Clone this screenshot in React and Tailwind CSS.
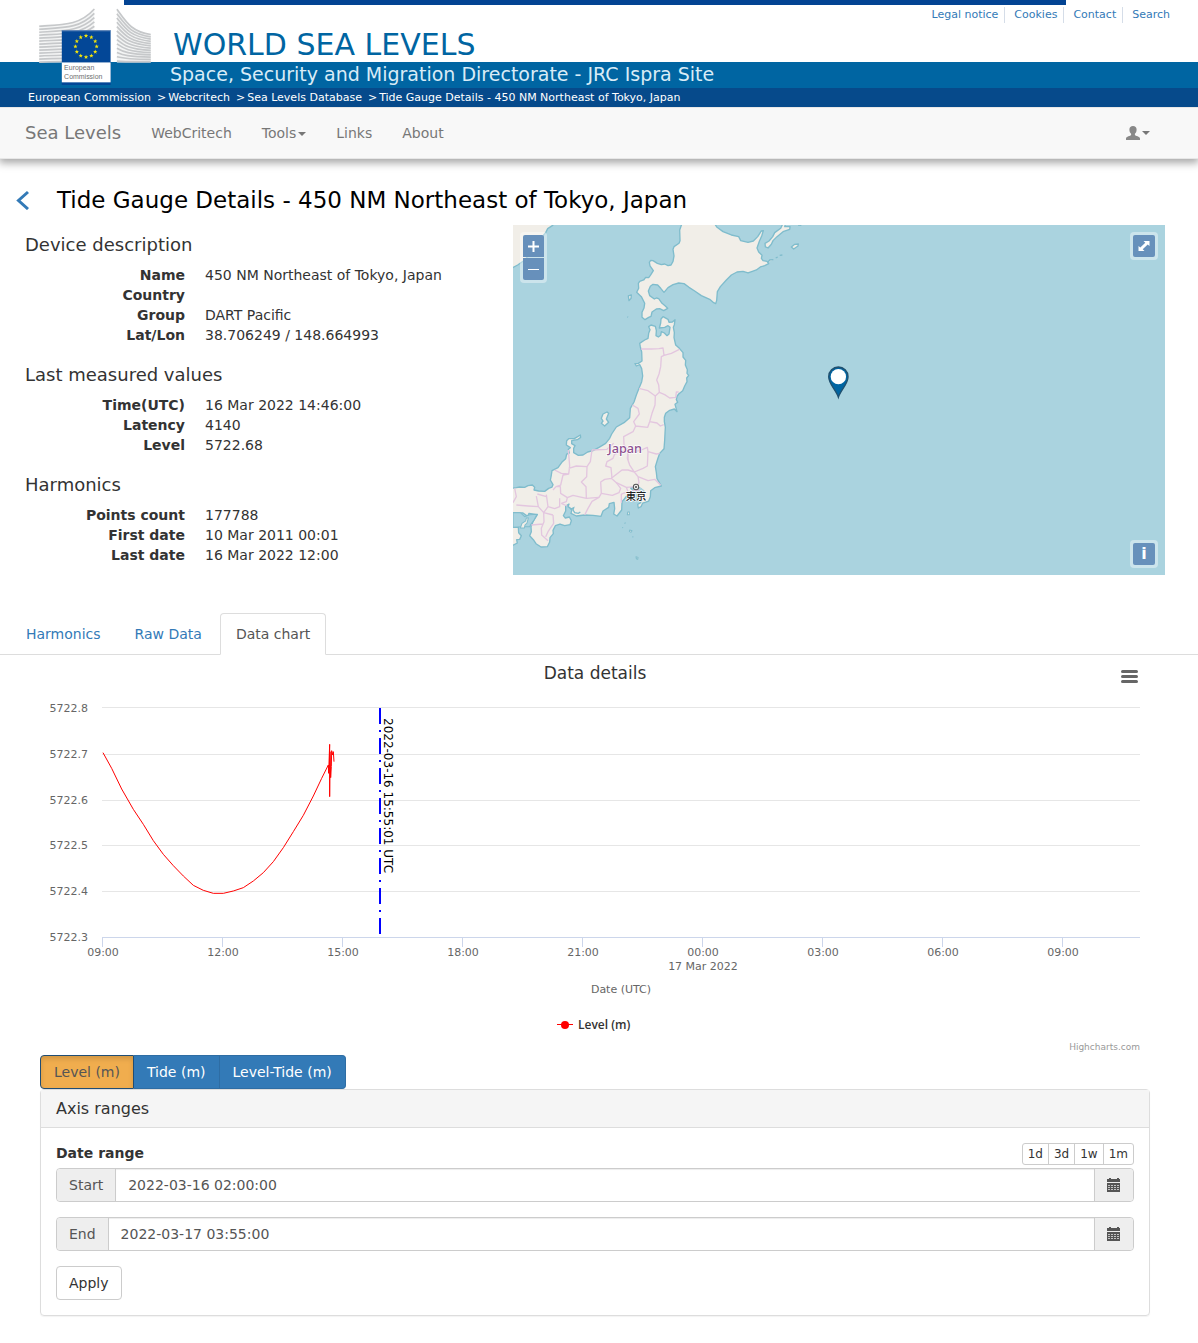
import React, { useState } from "react";

const STAR = "M0 -6 L1.5 -2 5.7 -1.9 2.4 .8 3.5 4.9 0 2.5 -3.5 4.9 -2.4 .8 -5.7 -1.9 -1.5 -2Z";

function CommissionLogo() {
  const rows = Array.from({ length: 13 }, (_, i) => i);
  return (
    <svg viewBox="27 24 336 232" className="absolute left-[39px] top-2 h-[77px] w-[112px]" role="img" aria-label="European Commission">
      <path d="M27 76 C110 70 150 75 193 25 V188 H27Z" fill="#f4f5f5" />
      <path d="M261 24 C300 75 300 95 363 103 V188 H261Z" fill="#f4f5f5" />
      <g fill="none" stroke="#c6c8ca" strokeWidth="5">
        {rows.map((i) => (
          <path key={i} d={`M27 ${79 + i * 9} C105 ${74 + i * 9} 150 ${75 + i * 9.5} 193 ${27 + i * 13}`} />
        ))}
        {rows.map((i) => (
          <path key={`r${i}`} d={`M261 ${28 + i * 13} C${290 - i} ${68 + i * 9.8} ${305 - i} ${95 + i * 7.6} 363 ${104 + i * 6.8}`} />
        ))}
      </g>
      <rect x="95" y="91" width="147" height="165" fill="#034797" />
      <rect x="95" y="91" width="147" height="3" fill="#6f8fbd" />
      <rect x="95" y="188" width="147" height="60" fill="#fff" />
      <g fill="#f5e50a">
        {Array.from({ length: 12 }, (_, i) => (
          <path key={i} d={STAR} transform={`translate(${168 + 32 * Math.sin((i * Math.PI) / 6)} ${140 - 32 * Math.cos((i * Math.PI) / 6)}) scale(1.15)`} />
        ))}
      </g>
      <g fill="#6d6e70" fontFamily="Liberation Sans, sans-serif" fontSize="21">
        <text x="102" y="211">European</text>
        <text x="102" y="237">Commission</text>
      </g>
    </svg>
  );
}

function Header() {
  const links = ["Legal notice", "Cookies", "Contact", "Search"];
  const crumbs = ["European Commission", "Webcritech", "Sea Levels Database", "Tide Gauge Details - 450 NM Northeast of Tokyo, Japan"];
  return (
    <header className="relative">
      <div className="h-[62px]">
        <div className="ml-[124px] mr-[132px] h-[5px] bg-[#034493]" />
        <div className="flex items-start justify-between pl-[173px] pr-7">
          <h1 className="pt-5 text-[30px] leading-10 whitespace-nowrap text-[#0065a2]">WORLD SEA LEVELS</h1>
          <ul className="flex pt-0.5 text-[11px] leading-4 text-[#337ab7]">
            {links.map((l, i) => (
              <li key={l} className={i < 3 ? "mr-[9px] border-r border-[#d5dde8] pr-[6px]" : ""}>
                <a href="#">{l}</a>
              </li>
            ))}
          </ul>
        </div>
      </div>
      <div className="h-[26px] bg-[#0065a2] pl-[170px] text-[19px] leading-6 whitespace-nowrap text-[#d9ecf7]">
        Space, Security and Migration Directorate - JRC Ispra Site
      </div>
      <nav aria-label="Breadcrumb" className="h-[19px] bg-[#064a8b] pl-7 text-[11px] leading-5 whitespace-nowrap text-white">
        {crumbs.map((c, i) => (
          <span key={c}>
            {i > 0 && <span className="pl-1.5 pr-0.5">&gt;</span>}
            <a href="#">{c}</a>
          </span>
        ))}
      </nav>
      <CommissionLogo />
    </header>
  );
}

function Caret() {
  return <span className="ml-0.5 inline-block border-x-4 border-t-4 border-x-transparent border-t-[#777] align-middle" />;
}

function Navbar() {
  return (
    <nav className="flex h-[52px] items-center border-y border-[#e7e7e7] bg-[#f8f8f8] pl-[25px] pr-12 text-sm text-[#777] shadow-[0_3px_8px_1px_rgba(0,0,0,0.35)]">
      <a href="#" className="mr-[30px] text-lg">Sea Levels</a>
      <div className="flex gap-[30px]">
        <a href="#">WebCritech</a>
        <button type="button">Tools<Caret /></button>
        <a href="#">Links</a>
        <a href="#">About</a>
      </div>
      <button type="button" aria-label="User" className="ml-auto flex items-center">
        <svg viewBox="0 0 14 14" className="size-[14px]" fill="#888">
          <path d="M7 0C9.200 0 10.600 1.200 10.600 3.500C10.600 5.600 9.800 7 8.900 7.800V9C9.300 9.900 14 10.400 14 12.500V14H0V12.500C0 10.400 4.700 9.900 5.100 9V7.800C4.200 7 3.400 5.600 3.400 3.500C3.400 1.200 4.800 0 7 0Z" />
        </svg>
        <Caret />
      </button>
    </nav>
  );
}

const SECTIONS = [
  ["Device description", [["Name", "450 NM Northeast of Tokyo, Japan"], ["Country", ""], ["Group", "DART Pacific"], ["Lat/Lon", "38.706249 / 148.664993"]]],
  ["Last measured values", [["Time(UTC)", "16 Mar 2022 14:46:00"], ["Latency", "4140"], ["Level", "5722.68"]]],
  ["Harmonics", [["Points count", "177788"], ["First date", "10 Mar 2011 00:01"], ["Last date", "16 Mar 2022 12:00"]]],
];

function Details() {
  return (
    <div className="pt-2.5">
      {SECTIONS.map(([title, rows]) => (
        <section key={title} className="mb-5">
          <h3 className="mb-2.5 text-lg leading-5">{title}</h3>
          <dl className="grid grid-cols-[160px_1fr] gap-x-5 text-sm leading-5">
            {rows.map(([k, v]) => (
              <React.Fragment key={k}>
                <dt className="text-right font-bold">{k}</dt>
                <dd>{v}</dd>
              </React.Fragment>
            ))}
          </dl>
        </section>
      ))}
    </div>
  );
}

function MapDrawing() {
  return (
    <svg viewBox="0 15 1956 1050" preserveAspectRatio="xMidYMid slice" className="block h-full w-full bg-[#aad3df]" role="img" aria-label="Map of Japan">
      <g fill="#f1eee8" stroke="#7fbccc" strokeWidth="4" strokeLinejoin="round">
        <path d="M-5 10 L125 10 118 17 104 26 98 38 92 45 86 60 78 68 68 86 50 104 30 124 14 135 -5 145Z" />
        <path d="M507 10 L500 30 501 62 498 70 483 80 480 88 483 108 480 124 474 135 465 137 455 132 445 134 433 130 420 122 413 121 409 127 411 138 421 152 412 166 407 173 398 172 392 180 380 184 376 190 377 205 371 217 385 230 395 250 393 264 387 277 387 292 396 299 407 292 414 289 417 276 430 267 440 266 452 272 464 265 456 257 447 250 437 236 430 234 424 237 410 227 406 213 412 199 420 193 434 195 443 205 453 217 465 203 480 194 497 189 513 191 528 202 545 213 565 227 590 238 602 248 608 251 611 241 613 215 622 200 640 180 655 165 672 156 690 154 705 159 718 154 730 150 742 141 755 137 767 131 762 124 750 122 745 115 747 106 737 96 732 84 739 64 746 48 751 32 745 33 734 50 721 63 705 67 683 62 677 50 655 45 630 35 612 22 604 10Z" />
        <path d="M810 10 L803 25 785 38 779 50 768 63 756 70 757 81 765 84 775 73 780 62 792 50 810 35 830 28 831 20 815 20 818 10Z" />
        <path d="M835 81 L845 73 856 72 855 78 842 87Z M764 127 L770 120 781 119 M788 114 L794 111 M800 106 L808 105 M855 15 L865 16 M346 228 L355 225 354 235 348 242Z M343 290 l2 2" />
        <path d="M407 320 L414 315 427 319 430 332 429 347 436 351 443 346 445 335 454 339 462 347 468 342 471 322 465 317 455 322 439 324 443 309 444 297 450 290 465 298 468 307 478 306 486 299 484 314 481 322 484 338 483 353 488 375 499 385 510 398 510 411 518 421 517 435 523 449 522 460 527 466 521 474 522 485 515 498 509 512 497 522 492 529 490 539 494 547 486 553 492 575 484 567 470 571 458 580 454 592 454 605 457 622 456 640 455 660 453 686 440 700 434 717 427 740 430 758 432 776 445 798 425 803 413 812 412 830 407 843 389 849 384 860 376 864 374 853 383 848 384 838 394 827 392 812 382 805 370 799 353 804 360 812 358 824 340 829 334 837 327 845 326 870 312 888 302 882 305 866 303 847 289 851 287 862 270 873 264 889 240 886 215 885 190 888 174 880 177 868 165 860 168 852 158 858 158 873 151 887 157 894 169 891 175 902 171 914 155 917 141 912 127 917 120 931 121 941 111 953 110 966 103 980 84 981 69 971 61 959 50 947 55 935 54 920 60 905 67 894 73 884 48 880 44 889 30 879 0 878 -5 878 -5 805 10 803 20 801 35 802 45 797 58 795 65 802 63 810 77 813 95 814 107 805 117 801 120 794 112 780 115 765 117 752 135 743 148 725 158 716 161 702 169 699 166 688 172 683 160 675 161 662 167 656 184 656 202 645 203 652 193 659 176 662 176 671 186 677 182 685 182 698 196 706 210 705 224 696 240 692 258 682 278 670 290 655 296 642 310 621 333 608 350 593 352 565 363 546 370 525 378 505 386 485 389 468 386 446 380 434 370 438 366 431 376 430 387 423 386 396 382 381 380 370 395 360 405 355 407 340 411 329Z" />
        <g transform="translate(0 510)">
          <path d="M265 85 L270 72 282 66 287 70 280 87 287 97 275 108 265 100 270 93Z M-5 412 L16 411 17 428 25 437 20 448 11 449 13 459 -5 468Z" />
          <path d="M344 366 h5 v8 h-6z M350 420 l7 2 -3 5 -5 -3z M369 500 l6 2 -1 6 -4 -2z M334 400 l4 -2 M328 412 l2 2 M358 440 l3 1" strokeWidth="3" />
        </g>
      </g>
      <path d="M0 878 L22 878 35 890 50 884 72 883 62 902 54 912 50 920 30 920 0 922Z" fill="#aad3df" stroke="#7fbccc" strokeWidth="3" />
      <path d="M22 924 L27 910 38 903 40 894 46 894 42 909 36 915 34 924Z" fill="#f1eee8" stroke="#7fbccc" strokeWidth="3" />
      <path d="M172 868 L182 863 180 870 185 878 196 880 202 876" fill="none" stroke="#7fbccc" strokeWidth="4" />
      <path d="M370 806 L384 803 394 812 386 818 374 814Z" fill="#aad3df" />
      <g fill="none" stroke="#e3c6df" strokeWidth="4" strokeLinejoin="round">
        <path d="M384 387 L415 387 438 386 450 384 453 406 445 410 443 440 438 462 431 480 437 495 439 517 427 528 405 512 378 505 M453 406 L475 400 499 388 M439 517 L455 524 470 534 488 532 490 516 497 516" />
        <g transform="translate(0 510)">
          <path d="M427 18 L426 45 417 70 410 95 404 112 368 108 360 125 332 140 333 165 345 180 345 210 M358 45 L375 55 379 72 362 95 368 108 M410 95 L432 99 442 108 452 104" />
          <path d="M345 180 L355 188 385 180 403 172 405 185 430 192 440 190 M405 185 L403 228 390 235 364 246 345 240 327 240 295 265 275 268 263 276 265 310 258 322 237 334 225 355 215 375 M364 246 L350 225 343 205 345 180 M364 246 L375 260 378 278 370 290 340 292 310 278 295 265 M375 260 L405 272 425 268 443 286" />
          <path d="M345 180 L305 192 300 205 282 215 278 228 294 233 297 265 M237 180 L282 178 302 160 M237 180 L232 215 222 230 221 260 205 276 219 290 220 325 180 316 163 323 160 335 145 340 M258 322 L220 325 M163 323 L143 310 142 290 129 290 120 300 M166 180 L170 228 167 252 150 255 143 285 129 290 M167 235 L190 228 221 230 M125 240 L145 250 167 252 M310 278 L323 295 318 308 298 316 265 310" />
          <path d="M340 292 L345 305 325 312 325 338 M345 305 L380 300 M100 314 L105 350 92 368 93 395 85 415 86 435 105 452 M70 318 L76 350 92 368 120 375 M5 295 L10 320 0 338 M10 345 L45 348 76 350 M73 312 L100 320 M105 350 L125 356 140 350 140 325 M120 375 L122 400 105 425 98 440 M55 405 L90 402 M145 340 L162 348" />
        </g>
      </g>
      <text x="336" y="700" textAnchor="middle" fontFamily="Noto Sans, sans-serif" fontSize="38" fontWeight="500" fill="#8d518f" stroke="#fff" strokeWidth="4" paintOrder="stroke">Japan</text>
      <circle cx="369" cy="801" r="8" fill="#eee" stroke="#555" strokeWidth="3" />
      <circle cx="369" cy="801" r="3" fill="#444" />
      <text x="369" y="840" textAnchor="middle" fontFamily="Noto Sans CJK JP, sans-serif" fontSize="31" fontWeight="500" fill="#222" stroke="#fff" strokeWidth="4" paintOrder="stroke">東京</text>
      <path d="M976 532 C969 510 947 492 947 470 A29 29 0 0 1 1005 470 C1005 492 983 510 976 532Z" fill="#0065a2" stroke="#20506f" strokeWidth="4" />
      <circle cx="976" cy="470" r="23" fill="#fff" />
    </svg>
  );
}

const MAP_BUTTON = "flex size-[22px] items-center justify-center rounded-xs bg-[#6790bb] text-white";

function MapPanel() {
  return (
    <div className="relative h-[350px]">
      <MapDrawing />
      <div className="absolute left-[7px] top-[7px] flex flex-col gap-px rounded bg-white/40 p-[3px]">
        <button type="button" aria-label="Zoom in" className="flex h-[22px] w-[21px] items-center justify-center rounded-t-xs bg-[#6790bb]">
          <svg viewBox="0 0 11 11" className="size-[11px]" stroke="#fff" strokeWidth="2"><path d="M5.500 0V11M0 5.500H11" /></svg>
        </button>
        <button type="button" aria-label="Zoom out" className="flex h-[22px] w-[21px] items-center justify-center rounded-b-xs bg-[#6790bb]">
          <svg viewBox="0 0 11 11" className="size-[11px]" stroke="#fff"><path d="M0 5.500H11" /></svg>
        </button>
      </div>
      <div className="absolute right-[7px] top-[7px] rounded bg-white/40 p-[3px]">
        <button type="button" aria-label="Full screen" className={MAP_BUTTON}>
          <svg viewBox="0 0 12 12" className="size-3" fill="#fff">
            <path d="M5.500 1H11.500V6L9.700 4.500 4.700 9.200 6.500 11H.5V6L2.300 7.500 7.300 2.800Z" />
          </svg>
        </button>
      </div>
      <div className="absolute bottom-[7px] right-[7px] rounded bg-white/40 p-[3px]">
        <button type="button" aria-label="Attributions" className={MAP_BUTTON + " text-base leading-4 font-bold"}>i</button>
      </div>
    </div>
  );
}

function Tabs() {
  return (
    <div role="tablist" className="flex h-[42px] items-stretch border-b border-[#ddd] pl-2.5 text-sm text-[#337ab7]">
      <button type="button" role="tab" className="mr-0.5 px-4">Harmonics</button>
      <button type="button" role="tab" className="mr-0.5 px-4">Raw Data</button>
      <button type="button" role="tab" aria-selected="true" className="-mb-px rounded-t border border-[#ddd] border-b-white bg-white px-[15px] text-[#555]">
        Data chart
      </button>
    </div>
  );
}

const Y_TICKS = [[708, "5722.8"], [754, "5722.7"], [800, "5722.6"], [845, "5722.5"], [891, "5722.4"], [937, "5722.3"]];
const X_TICKS = ["09:00", "12:00", "15:00", "18:00", "21:00", "00:00", "03:00", "06:00", "09:00"];

function Chart() {
  return (
    <div className="relative">
      <svg viewBox="40 655 1110 400" className="block w-full" fontFamily="DejaVu Sans, sans-serif" fontSize="11" fill="#666" role="img" aria-label="Data details">
        <text x="595" y="679" textAnchor="middle" fontSize="17" fill="#333">Data details</text>
        {Y_TICKS.map(([y, label], i) => (
          <g key={label}>
            <path d={`M102 ${i === 0 ? y - 0.5 : y + 0.5}H1140`} stroke={y === 937 ? "#ccd6eb" : "#e6e6e6"} />
            <text x="88" y={y + 4} textAnchor="end">{label}</text>
          </g>
        ))}
        {X_TICKS.map((label, i) => (
          <g key={i}>
            <path d={`M${102.5 + i * 120} 937V947`} stroke="#ccd6eb" />
            <text x={103 + i * 120} y="956" textAnchor="middle">{label}</text>
          </g>
        ))}
        <text x="703" y="970" textAnchor="middle">17 Mar 2022</text>
        <text x="621" y="993" textAnchor="middle">Date (UTC)</text>
        <path d="M380 708V934" stroke="#00f" strokeWidth="2" strokeDasharray="16 6 2 6" />
        <text transform="translate(384 718) rotate(90)" fontSize="12" fill="#000">2022-03-16 15:55:01 UTC</text>
        <g transform="translate(0 600) scale(.33333)">
          <path d="M309 458 L335 505 365 567 400 628 430 673 460 722 490 763 520 797 550 828 580 856 610 871 640 880 670 880 700 873 730 863 760 843 790 818 820 785 850 743 880 695 910 646 940 588 965 535 985 495 986 520 989 433 989 590 990 455 992 533 994 500 995 452 998 465 1000 455 1002 485" fill="none" stroke="#f00" strokeWidth="3" strokeLinejoin="round" />
        </g>
        <path d="M557 1024.500H573" stroke="#f00" />
        <circle cx="565" cy="1025" r="4" fill="#f00" />
        <text x="578" y="1029" fontFamily="Open Sans, sans-serif" fontSize="12" fontWeight="600" fill="#333">Level (m)</text>
        <text x="1140" y="1050" textAnchor="end" fontSize="9" fill="#999">Highcharts.com</text>
      </svg>
      <button type="button" aria-label="Chart context menu" className="absolute right-3 top-[14px] flex w-[17px] flex-col gap-0.5 py-px">
        <span className="h-[3px] w-full rounded-full bg-[#666]" />
        <span className="h-[3px] w-full rounded-full bg-[#666]" />
        <span className="h-[3px] w-full rounded-full bg-[#666]" />
      </button>
    </div>
  );
}

function CalendarIcon() {
  return (
    <svg viewBox="0 0 14 14" className="size-[14px]">
      <path d="M0 1H2V0H4V1H10V0H12V1H13V4H0Z M0 5H13V14H0Z" fill="#555" />
      <path d="M1 7.500H12M1 9.500H12M1 11.500H12" stroke="#c4c4c4" strokeDasharray="2 1" />
    </svg>
  );
}

function DateField({ id, label, initial }) {
  const [value, setValue] = useState(initial);
  return (
    <div className="mb-[15px] flex h-[34px] rounded border border-[#ccc] text-sm text-[#555]">
      <label htmlFor={id} className="rounded-l bg-[#eee] px-3 leading-8">{label}</label>
      <input id={id} value={value} onChange={(e) => setValue(e.target.value)} className="min-w-0 flex-1 border-x border-[#ccc] px-3 shadow-[inset_0_1px_1px_rgba(0,0,0,0.075)]" />
      <button type="button" aria-label={"Pick " + label} className="flex w-[38px] items-center justify-center rounded-r bg-[#eee]">
        <CalendarIcon />
      </button>
    </div>
  );
}

function Controls() {
  return (
    <>
      <div className="flex h-[34px] text-sm text-white">
        <button type="button" className="rounded-l border border-[#204d74] bg-[#f0ad4e] px-[13px] text-[#555] shadow-[inset_0_3px_5px_rgba(0,0,0,0.125)]">Level (m)</button>
        <button type="button" className="border-y border-r border-[#2e6da4] bg-[#337ab7] px-[13px]">Tide (m)</button>
        <button type="button" className="rounded-r border-y border-r border-[#2e6da4] bg-[#337ab7] px-[13px]">Level-Tide (m)</button>
      </div>
      <section className="rounded border border-[#ddd] shadow-[0_1px_1px_rgba(0,0,0,0.05)]">
        <h3 className="border-b border-[#ddd] bg-[#f5f5f5] px-[15px] pt-[9px] pb-2 text-base leading-5">Axis ranges</h3>
        <div className="p-[15px]">
          <div className="flex h-[25px] items-start justify-between">
            <h4 className="text-sm leading-5 font-bold">Date range</h4>
            <div className="flex h-[22px] divide-x divide-[#ccc] rounded-[3px] border border-[#ccc] text-xs">
              {["1d", "3d", "1w", "1m"].map((r) => (
                <button key={r} type="button" className="px-[5px]">{r}</button>
              ))}
            </div>
          </div>
          <DateField id="start" label="Start" initial="2022-03-16 02:00:00" />
          <DateField id="end" label="End" initial="2022-03-17 03:55:00" />
          <button type="button" className="h-[34px] rounded border border-[#ccc] px-3 text-sm">Apply</button>
        </div>
      </section>
    </>
  );
}

export default function App() {
  return (
    <div className="bg-white pb-7 font-['DejaVu_Sans',sans-serif] text-[#333]">
      <Header />
      <Navbar />
      <main>
        <div className="flex h-[66px] items-center pl-4 pt-4">
          <a href="#" aria-label="Back" className="mr-[27px]">
            <svg viewBox="0 0 14 20" className="h-5 w-[14px]" fill="none" stroke="#337ab7" strokeWidth="3"><path d="M12 2L2.500 10.500 12 19" /></svg>
          </a>
          <h2 className="text-[23px] leading-7 text-black">Tide Gauge Details - 450 NM Northeast of Tokyo, Japan</h2>
        </div>
        <div className="grid grid-cols-[42.8%_57.2%] pl-[25px] pr-[33px] pb-7">
          <Details />
          <MapPanel />
        </div>
        <Tabs />
        <div className="pl-10 pr-12">
          <Chart />
          <Controls />
        </div>
      </main>
    </div>
  );
}
